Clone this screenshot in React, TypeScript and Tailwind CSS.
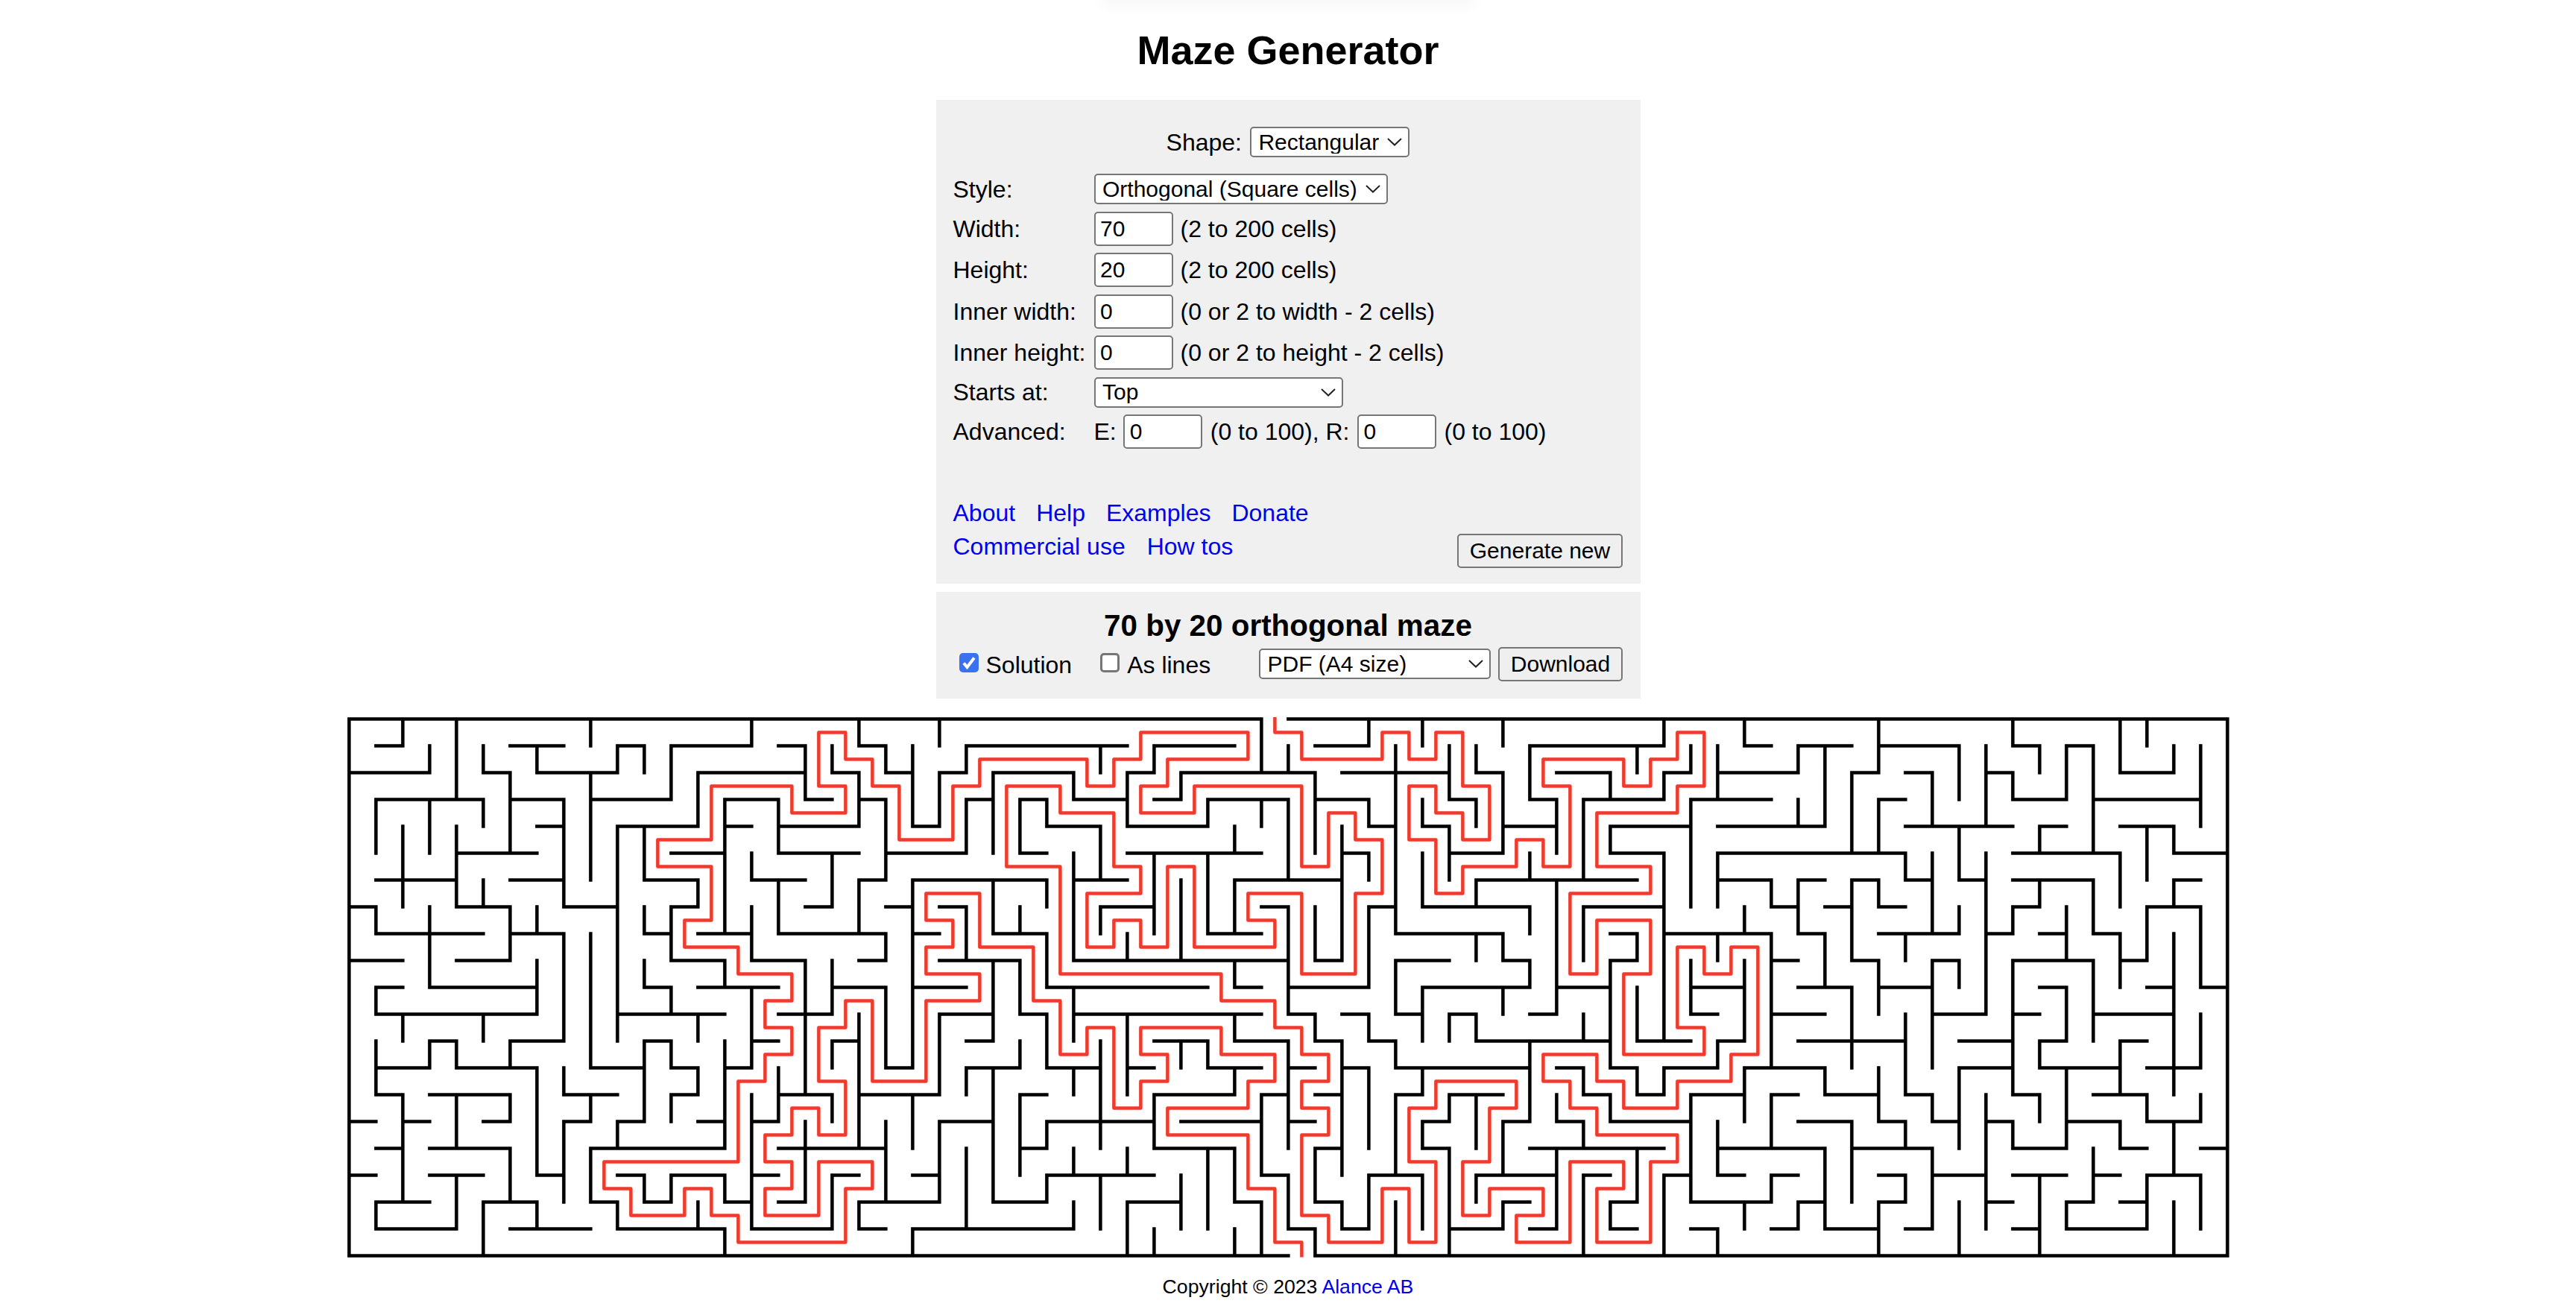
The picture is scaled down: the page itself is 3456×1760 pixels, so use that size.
import type { ReactNode } from "react";

// maze walls as grid spans: index in the list = row (or column), "a-b" = from, to
const H = [
  "0-34 35-70",
  "1-2 6-8 10-11 12-15 16-17 19-20 23-29 30-33 36-38 44-49 52-53 54-56 57-60 62-63 64-65",
  "0-3 5-6 7-10 13-17 18-19 20-21 22-23 24-27 29-30 31-36 37-41 42-43 45-47 49-50 51-54 56-57 58-59 61-62 66-68",
  "1-5 6-8 9-12 14-16 17-18 19-20 23-24 25-26 27-29 30-31 32-35 36-38 41-42 44-45 46-49 50-53 57-58 62-64 65-69",
  "7-8 10-13 14-15 16-19 21-22 26-28 29-32 38-39 40-41 43-45 47-50 51-55 58-62 63-64 66-68",
  "4-7 12-14 16-19 20-23 25-26 29-34 37-38 41-43 47-49 51-58 62-66 68-70",
  "1-4 6-8 11-13 15-17 19-20 21-26 27-29 33-37 42-48 51-53 54-55 56-57 58-59 60-61 62-65 68-69",
  "0-1 4-6 8-10 12-13 17-18 20-21 22-23 28-30 34-35 38-39 40-44 46-49 53-54 55-56 57-58 62-63 67-69",
  "1-5 6-8 11-12 13-15 16-20 21-22 24-26 32-34 39-43 47-48 49-53 54-55 57-60 61-62 63-64 65-66",
  "0-2 4-6 12-14 15-17 19-20 22-25 27-35 36-37 39-41 43-44 47-48 53-54 56-57 59-60 62-65 66-67",
  "1-2 3-7 11-12 13-16 18-20 21-23 26-32 33-34 35-38 40-44 45-47 50-52 54-56 57-59 63-64 67-68 69-70",
  "1-7 10-14 16-18 22-24 25-26 27-34 35-36 37-38 39-40 41-42 44-45 50-51 53-55 59-61 62-63 65-68",
  "3-4 6-8 11-12 15-16 18-19 23-24 30-32 33-35 36-37 38-39 42-47 48-50 51-52 54-58 60-62 63-64 66-67",
  "1-3 4-7 9-11 12-13 14-15 20-21 23-25 26-28 29-30 32-34 35-36 37-38 39-44 45-46 47-48 49-51 52-55 60-62 63-66 67-69",
  "1-2 3-6 8-10 12-13 16-18 19-22 25-26 30-33 34-35 36-37 39-40 41-43 46-47 48-49 50-52 53-54 55-57 58-59 62-63 65-67",
  "0-1 2-3 5-6 8-9 10-11 13-14 15-16 22-24 26-30 31-34 35-36 40-41 43-44 45-46 47-50 54-56 57-58 59-60 61-62 64-66 67-69",
  "1-2 3-6 9-14 16-20 25-26 30-33 36-37 40-41 44-49 51-55 56-59 62-64 66-67 69-70",
  "0-1 3-5 7-8 10-11 12-14 15-16 18-19 21-22 26-30 34-35 38-40 42-45 46-47 49-50 51-52 53-54 57-58 59-61 62-64 65-66 67-69",
  "1-3 5-7 9-10 11-12 14-15 16-17 19-22 24-26 29-31 33-34 36-37 43-44 47-48 50-53 54-55 57-58 61-62 64-65 66-67",
  "1-4 6-9 10-14 15-18 19-20 21-27 35-36 37-38 41-43 44-45 47-48 50-51 53-54 55-57 58-59 62-63 64-67",
  "0-35 36-70",
];

const V = [
  "0-20",
  "3-5 7-8 10-11 12-14 18-19",
  "0-1 4-7 11-12 14-18",
  "1-2 3-5 7-10 12-13",
  "0-3 4-7 12-13 14-16 17-19",
  "1-2 3-4 6-7 11-12 18-20",
  "2-5 7-9 12-13 14-15 16-18",
  "1-2 7-8 9-11 13-17 18-19",
  "3-7 8-12 13-14 15-18",
  "0-1 2-6 8-13 14-15 16-18",
  "1-2 4-12 15-16 18-19",
  "1-2 4-6 7-8 9-10 12-15 17-18",
  "1-3 7-9 10-11 12-13 14-15 17-18",
  "2-4 6-7 11-12 13-14 18-19",
  "3-8 9-10 12-16 17-18 19-20",
  "0-1 5-6 7-9 10-13 14-19",
  "3-5 6-8 13-15",
  "1-3 9-14 15-18",
  "1-2 5-7 9-11 12-13 14-15 17-19",
  "0-1 2-4 6-8 11-16 18-19",
  "1-2 3-6 8-9 10-13 15-18",
  "1-4 6-13 14-16 19-20",
  "0-1 2-4 11-14 15-18",
  "1-2 3-5 7-9 13-14 16-19",
  "2-5 6-8 9-12 13-18",
  "3-5 7-8 9-11 12-13 14-17",
  "3-4 6-7 8-10 11-13 15-16 17-18",
  "2-3 5-9 10-12 13-14 16-17 18-19",
  "1-2 4-6 7-8 12-16 17-19",
  "2-4 8-9 11-14 16-17 18-20",
  "1-2 5-8 14-16 19-20",
  "2-3 6-9 12-13 17-19",
  "3-4 5-8 12-13 16-19",
  "4-5 6-8 9-10 11-12 13-14 16-18 19-20",
  "0-2 3-4 14-17 18-20",
  "1-2 3-6 7-11 12-16 17-19",
  "2-5 7-9 11-12 16-18 19-20",
  "4-9 12-17 18-19",
  "0-1 3-4 5-6 7-10 11-12 13-16 17-19",
  "1-8 9-11 12-13 14-17 18-20",
  "0-1 3-4 5-7 10-12 13-14 15-16 17-19",
  "1-3 4-6 11-12 14-15 16-20",
  "1-2 3-4 6-7 8-9 11-12 14-16 17-18",
  "0-1 2-5 8-9 10-11 15-17 18-19",
  "1-3 5-6 7-8 9-10 12-15",
  "3-5 6-11 14-15 16-19",
  "3-6 7-9 11-12 13-14 15-16 17-20",
  "2-3 4-5 9-13 14-15 18-19",
  "1-2 8-9 10-12 13-14 16-18",
  "0-1 2-3 5-12 13-14 17-20",
  "1-2 3-7 9-11 14-18",
  "1-3 5-7 8-9 12-13 15-17 19-20",
  "0-1 7-8 9-12 13-15 18-19",
  "6-7 8-13 14-16 17-18",
  "1-2 3-4 6-8 18-19",
  "1-4 8-10 13-14 16-19",
  "2-5 6-9 10-13 15-18",
  "0-2 3-5 6-7 9-11 13-15 18-20",
  "5-6 8-9 11-14 15-16 17-18",
  "2-4 5-8 9-13 14-15 16-19",
  "1-3 4-6 7-8 9-10 13-16 18-20",
  "1-4 5-11 14-19",
  "0-1 2-3 7-8 9-14 15-16",
  "1-2 4-5 6-7 12-13 14-15 17-20",
  "1-3 7-9 10-12 13-16 18-19",
  "1-5 6-8 9-12 16-18",
  "0-2 5-7 8-10 12-14 15-16",
  "0-1 4-6 7-9 14-15 17-19",
  "1-2 4-5 6-7 8-14 15-17 18-20",
  "1-4 7-10 11-13 14-15 17-19",
  "0-20",
];

// solution route, in cells
const ROUTE =
  "34,-0.57 34,0 35,0 35,1 38,1 38,0 39,0 39,1 40,1 40,0 41,0 41,2 42,2 42,4 41,4 41,3 40,3 40,2 39,2 39,4 40,4 40,6 41,6 41,5 43,5 43,4 44,4 44,5 45,5 45,2 44,2 44,1 47,1 47,2 48,2 48,1 49,1 49,0 50,0 50,2 49,2 49,3 46,3 46,5 48,5 48,6 45,6 45,9 46,9 46,7 48,7 48,9 47,9 47,12 50,12 50,11 49,11 49,8 50,8 50,9 51,9 51,8 52,8 52,12 51,12 51,13 49,13 49,14 47,14 47,13 46,13 46,12 44,12 44,13 45,13 45,14 46,14 46,15 49,15 49,16 48,16 48,19 46,19 46,17 47,17 47,16 45,16 45,19 43,19 43,18 44,18 44,17 42,17 42,18 41,18 41,16 42,16 42,14 43,14 43,13 40,13 40,14 39,14 39,16 40,16 40,19 39,19 39,17 38,17 38,19 36,19 36,18 35,18 35,15 36,15 36,14 35,14 35,13 36,13 36,12 35,12 35,11 34,11 34,10 32,10 32,9 26,9 26,5 24,5 24,2 26,2 26,3 28,3 28,5 29,5 29,6 27,6 27,8 28,8 28,7 29,7 29,8 30,8 30,5 31,5 31,8 34,8 34,7 33,7 33,6 35,6 35,9 37,9 37,6 38,6 38,4 37,4 37,3 36,3 36,5 35,5 35,2 31,2 31,3 29,3 29,2 30,2 30,1 33,1 33,0 29,0 29,1 28,1 28,2 27,2 27,1 23,1 23,2 22,2 22,4 20,4 20,2 19,2 19,1 18,1 18,0 17,0 17,2 18,2 18,3 16,3 16,2 13,2 13,4 11,4 11,5 13,5 13,7 12,7 12,8 14,8 14,9 16,9 16,10 15,10 15,11 16,11 16,12 15,12 15,13 14,13 14,16 9,16 9,17 10,17 10,18 12,18 12,17 13,17 13,18 14,18 14,19 18,19 18,17 19,17 19,16 17,16 17,18 15,18 15,17 16,17 16,16 15,16 15,15 16,15 16,14 17,14 17,15 18,15 18,13 17,13 17,11 18,11 18,10 19,10 19,13 21,13 21,10 23,10 23,9 21,9 21,8 22,8 22,7 21,7 21,6 23,6 23,8 25,8 25,10 26,10 26,12 27,12 27,11 28,11 28,14 29,14 29,13 30,13 30,12 29,12 29,11 32,11 32,12 34,12 34,13 33,13 33,14 30,14 30,15 33,15 33,17 34,17 34,19 35,19 35,19.56";

const px = (n: number) => (4.4 + 36 * n).toFixed(1);

function wallPath() {
  let d = "";
  H.forEach((row, j) => {
    row.split(" ").forEach((span) => {
      const [a, b] = span.split("-");
      d += `M${px(+a)} ${px(j)}H${px(+b)}`;
    });
  });
  V.forEach((col, i) => {
    col.split(" ").forEach((span) => {
      const [a, b] = span.split("-");
      d += `M${px(i)} ${px(+a)}V${px(+b)}`;
    });
  });
  return d;
}

function routePoints() {
  return ROUTE.split(" ")
    .map((p) => {
      const [c, r] = p.split(",");
      return `${px(+c + 0.5)},${px(+r + 0.5)}`;
    })
    .join(" ");
}

function Maze() {
  return (
    <svg width="2528" height="728" viewBox="0 0 2528 728" className="mx-auto mt-[23px] block">
      <path d={wallPath()} fill="none" stroke="#000" strokeWidth="4.5" strokeLinecap="square" />
      <polyline points={routePoints()} fill="none" stroke="#ef3a2c" strokeWidth="4.5" strokeLinejoin="round" />
    </svg>
  );
}

function Select({ width, options }: { width: string; options: string[] }) {
  return (
    <div className={`relative h-[41px] shrink-0 ${width}`}>
      <select className="h-full w-full appearance-none rounded-[5px] border-2 border-[#767676] bg-white pl-[9.5px] text-[30px] leading-none text-black">
        {options.map((o) => (
          <option key={o}>{o}</option>
        ))}
      </select>
      <svg
        width="20"
        height="11"
        viewBox="0 0 20 11"
        className="pointer-events-none absolute right-[10px] top-[15px]"
      >
        <path d="M1 1 10 9.5 19 1" fill="none" stroke="#222" strokeWidth="2" />
      </svg>
    </div>
  );
}

function NumberInput({ value }: { value: string }) {
  return (
    <input
      type="text"
      defaultValue={value}
      className="h-[46px] w-[106px] shrink-0 rounded-[5px] border-2 border-[#767676] bg-white pl-[6.5px] text-[30px] text-black"
    />
  );
}

function Row({ label, hint, children }: { label: string; hint?: string; children: ReactNode }) {
  return (
    <div className="mt-[9.5px] flex items-center">
      <span className="w-[189px] shrink-0">{label}</span>
      {children}
      {hint && <span className="ml-[10px]">{hint}</span>}
    </div>
  );
}

function Button({ children, className }: { children: ReactNode; className: string }) {
  return (
    <button className={`h-[46px] rounded-[5px] border-2 border-[#767676] bg-[#efefef] text-[30px] text-black ${className}`}>
      {children}
    </button>
  );
}

function Check({ checked }: { checked?: boolean }) {
  return (
    <span className="relative mb-[3px] block h-[26px] w-[26px] shrink-0">
      <input
        type="checkbox"
        defaultChecked={checked}
        className={
          checked
            ? "block h-full w-full appearance-none rounded-[5px] bg-[#3b71f0]"
            : "block h-full w-full appearance-none rounded-[5px] border-[3px] border-[#767676] bg-white"
        }
      />
      {checked && (
        <svg width="26" height="26" viewBox="0 0 26 26" className="pointer-events-none absolute left-0 top-0">
          <path d="M6 13.5 10.5 19 20 6.5" fill="none" stroke="#fff" strokeWidth="4" />
        </svg>
      )}
    </span>
  );
}

function Link({ children }: { children: ReactNode }) {
  return <a href="#" className="text-[#0000ee]">{children}</a>;
}

export default function App() {
  return (
    <div className="min-h-screen bg-white text-[32px] leading-[36px] text-black [font-family:'Liberation_Sans',Arial,sans-serif]">
      <div className="mx-auto h-0 w-[490px] shadow-[0_0_18px_4px_rgba(0,0,0,0.08)]" />

      <h1 className="pt-[36px] pb-[36px] text-center text-[54px] leading-[62px] font-bold">Maze Generator</h1>

      <div className="mx-auto w-[945px] bg-[#f0f0f0] pt-[36px] pr-[23.5px] pb-[21px] pl-[23px]">
        <div className="flex items-center justify-center gap-[11px]">
          <span>Shape:</span>
          <Select width="w-[214px]" options={["Rectangular", "Circular", "Triangular", "Hexagonal"]} />
        </div>

        <div className="mt-[22px] flex items-center">
          <span className="w-[189px] shrink-0">Style:</span>
          <Select width="w-[394px]" options={["Orthogonal (Square cells)", "Sigma (Hexagonal cells)", "Delta (Triangular cells)"]} />
        </div>

        <Row label="Width:" hint="(2 to 200 cells)">
          <NumberInput value="70" />
        </Row>
        <Row label="Height:" hint="(2 to 200 cells)">
          <NumberInput value="20" />
        </Row>
        <Row label="Inner width:" hint="(0 or 2 to width - 2 cells)">
          <NumberInput value="0" />
        </Row>
        <Row label="Inner height:" hint="(0 or 2 to height - 2 cells)">
          <NumberInput value="0" />
        </Row>
        <Row label="Starts at:">
          <Select width="w-[334px]" options={["Top", "Bottom", "Left", "Right"]} />
        </Row>
        <Row label="Advanced:">
          <span className="mr-[9.5px]">E:</span>
          <NumberInput value="0" />
          <span className="mx-[10.5px]">(0 to 100), R:</span>
          <NumberInput value="0" />
          <span className="ml-[10.5px]">(0 to 100)</span>
        </Row>

        <div className="mt-[64px] flex items-end justify-between">
          <div className="mb-[5.6px] leading-[45px]">
            <div className="flex gap-[28px]">
              <Link>About</Link>
              <Link>Help</Link>
              <Link>Examples</Link>
              <Link>Donate</Link>
            </div>
            <div className="flex gap-[29px]">
              <Link>Commercial use</Link>
              <Link>How tos</Link>
            </div>
          </div>
          <Button className="w-[222px]">Generate new</Button>
        </div>
      </div>

      <div className="mx-auto mt-[11px] w-[945px] bg-[#f0f0f0] pt-[21px] pb-[23px]">
        <h2 className="text-center text-[40.4px] leading-[48px] font-bold">70 by 20 orthogonal maze</h2>
        <div className="mt-[5px] flex items-center pr-[23.5px] pl-[31px]">
          <label className="mr-[38px] flex items-center gap-[10px]">
            <Check checked />
            <span className="pt-[2px]">Solution</span>
          </label>
          <label className="flex items-center gap-[10px]">
            <Check />
            <span className="pt-[2px]">As lines</span>
          </label>
          <div className="ml-auto flex items-center gap-[10px]">
            <Select width="w-[311px]" options={["PDF (A4 size)", "PDF (Letter size)", "SVG", "PNG"]} />
            <Button className="w-[167px]">Download</Button>
          </div>
        </div>
      </div>

      <Maze />

      <div className="mt-[22px] text-center text-[26.67px] leading-[32px]">
        Copyright © 2023 <Link>Alance AB</Link>
      </div>
    </div>
  );
}
